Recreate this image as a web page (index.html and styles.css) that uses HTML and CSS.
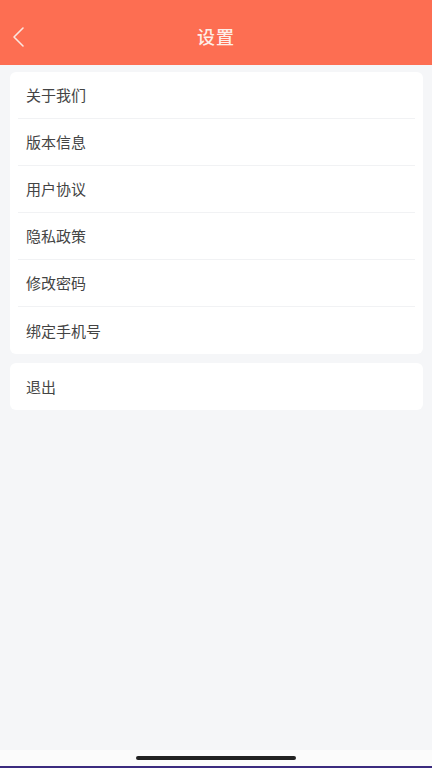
FILE: index.html
```html
<!DOCTYPE html>
<html lang="zh">
<head>
<meta charset="utf-8">
<link rel="stylesheet" href="styles.css">
</head>
<body>
<div class="page">
  <header class="nav">
    <svg class="back" width="14" height="22" viewBox="0 0 14 22"><path d="M12 2 L3 11 L12 20" fill="none" stroke="#fbe6df" stroke-width="1.6" stroke-linecap="round" stroke-linejoin="round"/></svg>
    <div class="title">设置</div>
  </header>
  <main class="content">
    <div class="card">
      <div class="row">关于我们</div>
      <div class="row">版本信息</div>
      <div class="row">用户协议</div>
      <div class="row">隐私政策</div>
      <div class="row">修改密码</div>
      <div class="row">绑定手机号</div>
    </div>
    <div class="card">
      <div class="row">退出</div>
    </div>
  </main>
  <footer class="home"><div class="indicator"></div></footer>
  <div class="edge"></div>
</div>
</body>
</html>
```
FILE: styles.css
```css
* { box-sizing: border-box; }
html, body { margin: 0; padding: 0; }
body {
  font-family: "Noto Sans CJK SC", "Noto Sans", sans-serif;
  background: #f5f6f8;
}
.page {
  width: 432px;
  height: 768px;
  display: flex;
  flex-direction: column;
  background: #f5f6f8;
}
.nav {
  position: relative;
  height: 65px;
  background: #fd6e52;
  display: flex;
  align-items: center;
  justify-content: center;
  padding-top: 7px;
}
.back {
  position: absolute;
  left: 11px;
  top: 26px;
}
.title {
  color: #fdeee8;
  font-size: 18px;
  font-weight: 500;
  letter-spacing: 1px;
}
.content {
  flex: 1;
  padding: 7px 9px 0 10px;
  display: flex;
  flex-direction: column;
  gap: 9px;
}
.card {
  background: #ffffff;
  border-radius: 6px;
  padding: 0 8px;
}
.row {
  height: 47px;
  display: flex;
  align-items: center;
  padding-left: 8px;
  padding-bottom: 1px;
  font-size: 15px;
  color: #444444;
  border-bottom: 1px solid #f1f2f4;
}
.row:last-child { border-bottom: none; }
.home {
  height: 16px;
  background: #fbfbfb;
  display: flex;
  justify-content: center;
  align-items: center;
}
.indicator {
  width: 160px;
  height: 4px;
  border-radius: 2px;
  background: #222;
}
.edge {
  height: 2px;
  background: #3b2b7e;
}
```
